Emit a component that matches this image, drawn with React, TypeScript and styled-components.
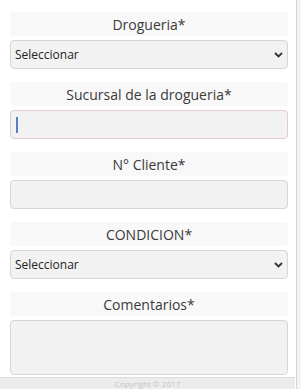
import React from 'react';
import styled, {createGlobalStyle} from 'styled-components';

const GlobalStyle = createGlobalStyle`
  html, body {
    margin: 0;
    padding: 0;
    background: #ffffff;
    font-family: "Open Sans", "Noto Sans", sans-serif;
    overflow: hidden;
  }
`;

const Frame = styled.div`
  display: flex;
  width: 301px;
  height: 389px;
  overflow: hidden;
`;

const Page = styled.div`
  flex: 1;
  display: flex;
  flex-direction: column;
`;

const Form = styled.div`
  display: flex;
  flex-direction: column;
  padding: 12px 7px 0 10px;
  gap: 13px;
`;

const Field = styled.div`
  display: flex;
  flex-direction: column;
  gap: 4px;
`;

const Label = styled.div`
  height: 24px;
  background: #f8f8f8;
  border-radius: 3px;
  color: #3a3a3a;
  font-size: 14px;
  line-height: 25px;
  text-align: center;
`;

const Box = styled.div<{ $h: number; $focus?: boolean }>`
  box-sizing: border-box;
  height: ${p => p.$h}px;
  background: #f2f2f2;
  border: 1px solid ${p => (p.$focus ? '#e6c9cc' : '#d6d6d6')};
  border-radius: 4px;
  display: flex;
  align-items: center;
  padding: 0 4px 0 4px;
  color: #222;
  font-size: 12px;
`;

const SelectText = styled.span`
  flex: 1;
`;

const Caret = styled.div`
  width: 2px;
  height: 16px;
  background: #5b7fc4;
  margin-left: 1px;
`;

const Footer = styled.div`
  margin-top: 2px;
  flex: 1;
  background: #ececec;
  border-top: 1px solid #dcdcdc;
  color: #c4c4c4;
  font-size: 8px;
  line-height: 9px;
  text-align: center;
  padding-top: 1px;
`;

const Scroll = styled.div`
  width: 4px;
  margin-left: 1px;
  background: #f4f4f4;
  border-left: 1px solid #d4d4d4;
`;

function Chevron() {
  return (
    <svg width="9" height="6" viewBox="0 0 9 6">
      <path d="M1 1 L4.5 4.5 L8 1" fill="none" stroke="#333" strokeWidth="1.8" />
    </svg>
  );
}

export default function App() {
  return (
    <Frame>
      <GlobalStyle />
      <Page>
        <Form>
          <Field>
            <Label>Drogueria*</Label>
            <Box $h={29}>
              <SelectText>Seleccionar</SelectText>
              <Chevron />
            </Box>
          </Field>
          <Field>
            <Label>Sucursal de la drogueria*</Label>
            <Box $h={29} $focus>
              <Caret />
            </Box>
          </Field>
          <Field>
            <Label>N° Cliente*</Label>
            <Box $h={29} />
          </Field>
          <Field>
            <Label>CONDICION*</Label>
            <Box $h={29}>
              <SelectText>Seleccionar</SelectText>
              <Chevron />
            </Box>
          </Field>
          <Field>
            <Label>Comentarios*</Label>
            <Box $h={55} />
          </Field>
        </Form>
        <Footer>Copyright © 2017</Footer>
      </Page>
      <Scroll />
    </Frame>
  );
}
